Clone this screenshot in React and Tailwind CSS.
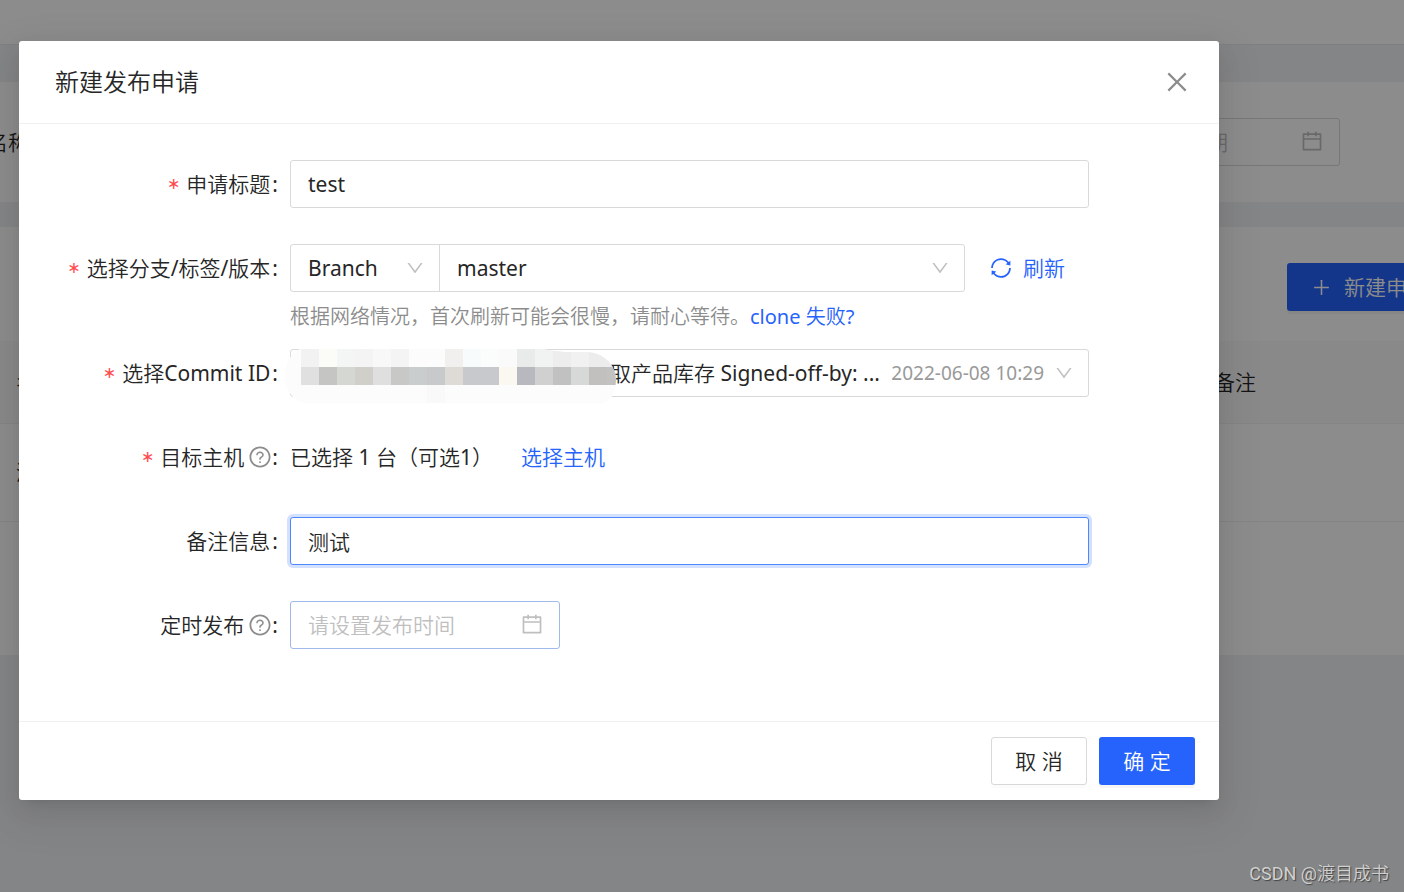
import React, { useState } from 'react'
import {
  AiOutlineCalendar,
  AiOutlineClose,
  AiOutlineDown,
  AiOutlinePlus,
  AiOutlineQuestionCircle,
  AiOutlineSync
} from 'react-icons/ai'

// 马赛克色块，每格 18px
const mosaic = [
  ['#f2f2f2', '#fbfcf8', '#f4f5f5', '#f4f4f4', '#f8f8f8', '#f4f4f4', '#fcfcfc', '#fcfcfc', '#f1f0ef', '#f8fbfb', '#fbfdfc', '#fbfafa', '#e8ebea', '#f1f2f2', '#ededed', '#f1f1f1', '#ececec', '#ececec'],
  ['#e0e0e0', '#c5c5c3', '#d5d7d3', '#d0cfca', '#dfdfe0', '#c8c8c6', '#c9cdce', '#c8c9ca', '#dedad6', '#c8c9cc', '#c8c9cc', '#faf8f0', '#b8b9be', '#d0d0d0', '#c1c1c1', '#d7d9d9', '#c1c0bf', '#c2c3c1'],
  ['#fcfcfc', '#fcfcfc', '#fcfcfc', '#fcfcfc', '#fcfcfc', '#fcfcfc', '#fcfcfc', '#f9f9f9', '#fcfcfc', '#fcfcfc', '#fcfcfc', '#fcfcfc', '#fcfcfc', '#fcfcfc', '#fcfcfc', '#fcfcfc', '#fcfcfc', '#fcfcfc']
]

const Mosaic = () => (
  <svg className="pointer-events-none absolute -left-[5px] top-0 h-[54px] w-[332px]" viewBox="0 0 332 54" aria-hidden="true">
    <clipPath id="mosaic-shape">
      <path d="M15 0H255C268 1 274 3 285 3H303C317 4 326 12 330 24C333 34 329 54 316 54H20C8 52 0 40 0 27C0 14 6 4 15 0Z" />
    </clipPath>
    <g clipPath="url(#mosaic-shape)" shapeRendering="crispEdges">
      <rect width="332" height="54" fill="#fcfcfc" />
      {mosaic.map((row, y) =>
        row.map((color, x) => (
          <rect key={`${y}-${x}`} x={16 + x * 18} y={y * 18} width="18" height="18" fill={color} />
        ))
      )}
    </g>
  </svg>
)

const FormItem = ({ label, htmlFor, required, tip, children }) => (
  <div className="grid grid-cols-[5fr_17fr_2fr]">
    <label htmlFor={htmlFor} className="flex h-12 items-center justify-end whitespace-nowrap pr-3">
      {required && <span className="mr-1.5 font-['DejaVu_Sans',sans-serif] text-base text-[#ff4d4f]">∗</span>}
      {label}
      {tip && <AiOutlineQuestionCircle className="ml-1 size-6 text-[#8c8c8c]" />}
      <span className={tip ? '' : 'ml-0.5'}>:</span>
    </label>
    <div className="min-w-0">{children}</div>
  </div>
)

const Arrow = () => (
  <AiOutlineDown className="pointer-events-none absolute right-[15px] top-3.5 size-5 text-[#bfbfbf]" />
)

// 遮罩下面的列表页
const ListPage = () => (
  <div className="min-h-screen overflow-hidden bg-[#f0f2f5]" inert>
    <header className="h-[45px] border-b border-[#e8e8e8] bg-white" />
    <section className="mt-[37px] flex h-[120px] items-center justify-between bg-white pr-16">
      <div className="-ml-[13px] flex items-center gap-3">
        <label htmlFor="app-name">名称:</label>
        <input id="app-name" className="h-12 w-60 rounded-[3px] border border-[#d9d9d9] px-4" />
      </div>
      <div className="relative">
        <input
          aria-label="结束日期"
          placeholder="结束日期"
          className="h-12 w-60 rounded-[3px] border border-[#d9d9d9] pl-[43px] placeholder:text-[#bfbfbf]"
        />
        <AiOutlineCalendar className="absolute right-4 top-[11px] size-6 text-[#bfbfbf]" />
      </div>
    </section>
    <section className="mt-[25px] h-[428px] bg-white pt-9">
      <div className="mb-[30px] flex justify-end">
        <button className="-mr-12 flex h-12 shrink-0 items-center gap-3 rounded-[3px] bg-[#2563fc] px-6 text-white shadow-[0_3px_0_rgba(0,0,0,0.045)]">
          <AiOutlinePlus className="size-[21px]" />
          新建申请
        </button>
      </div>
      <table className="w-full table-fixed text-left">
        <thead>
          <tr className="h-[82px] border-b border-[#f0f0f0] bg-[#fafafa]">
            <th className="w-[1198px] pl-4 font-normal">名称</th>
            <th className="pl-4 font-normal">备注</th>
          </tr>
        </thead>
        <tbody>
          <tr className="h-[98px] border-b border-[#f0f0f0]">
            <td className="pl-4">测试</td>
            <td />
          </tr>
        </tbody>
      </table>
    </section>
  </div>
)

const inputClass = 'block h-12 w-full rounded-[3px] border border-[#d9d9d9] bg-white px-[17px] outline-none'
const selectClass = 'block h-12 w-full appearance-none border border-[#d9d9d9] bg-white outline-none'

export default function App() {
  const [title, setTitle] = useState('test')
  const [remark, setRemark] = useState('测试')
  const [publishTime, setPublishTime] = useState('')

  return (
    <div className="relative font-['Noto_Sans','Noto_Sans_CJK_SC_DemiLight','Noto_Sans_CJK_SC_Light','Noto_Sans_CJK_SC',sans-serif] text-[21px] leading-8 text-[#262626]">
      <ListPage />

      <div className="absolute inset-0 overflow-hidden bg-black/45 px-[19px] pt-[41px]">
        <div
          role="dialog"
          aria-modal="true"
          aria-labelledby="dialog-title"
          className="w-full max-w-[1200px] rounded-[3px] bg-white shadow-[0_5px_9px_-6px_rgba(0,0,0,0.12),0_9px_24px_0_rgba(0,0,0,0.08),0_14px_42px_12px_rgba(0,0,0,0.05)]"
        >
          <div className="flex h-[83px] items-center justify-between border-b border-[#f0f0f0] pl-9 pr-7">
            <h2 id="dialog-title" className="text-2xl">新建发布申请</h2>
            <button aria-label="关闭" className="text-[#8c8c8c]">
              <AiOutlineClose className="size-7" />
            </button>
          </div>

          <form className="flex flex-col gap-9 px-9 pb-[72px] pt-9">
            <FormItem label="申请标题" htmlFor="title" required>
              <input id="title" className={inputClass} value={title} onChange={(e) => setTitle(e.target.value)} />
            </FormItem>

            <div className="flex flex-col gap-[18px]">
              <FormItem label="选择分支/标签/版本" htmlFor="branch-type" required>
                <div className="flex">
                  <div className="relative w-[150px]">
                    <select id="branch-type" className={`${selectClass} rounded-l-[3px] pl-[17px]`}>
                      <option>Branch</option>
                    </select>
                    <Arrow />
                  </div>
                  <div className="relative -ml-px flex-1">
                    <select aria-label="分支" className={`${selectClass} rounded-r-[3px] pl-[17px]`}>
                      <option>master</option>
                    </select>
                    <Arrow />
                  </div>
                  <button type="button" className="flex items-center gap-2.5 px-6 text-[#2563fc]">
                    <AiOutlineSync className="size-6" />
                    刷新
                  </button>
                </div>
                <p className="mt-[11px] whitespace-nowrap text-xl/7 text-[#8c8c8c]">
                  根据网络情况，首次刷新可能会很慢，请耐心等待。
                  <a href="#clone" className="text-[#2563fc]">clone 失败?</a>
                </p>
              </FormItem>

              <FormItem label="选择Commit ID" htmlFor="commit" required>
                <div className="relative">
                  <select id="commit" className={`${selectClass} rounded-[3px] pl-[319px]`}>
                    <option>取产品库存 Signed-off-by: ...</option>
                  </select>
                  <span className="pointer-events-none absolute right-[45px] top-2 text-[19px] text-[#999]">2022-06-08 10:29</span>
                  <Arrow />
                  <Mosaic />
                </div>
              </FormItem>
            </div>

            <FormItem label="目标主机" required tip>
              <div className="flex h-12 items-center gap-7">
                <span>已选择 1 台（可选1）</span>
                <button type="button" className="text-[#2563fc]">选择主机</button>
              </div>
            </FormItem>

            <FormItem label="备注信息" htmlFor="remark">
              <input
                id="remark"
                className="block h-12 w-full rounded-[3px] border border-[#4d88ff] bg-white px-[17px] shadow-[0_0_0_3px_rgba(37,99,252,0.2)] outline-none"
                value={remark}
                onChange={(e) => setRemark(e.target.value)}
              />
            </FormItem>

            <FormItem label="定时发布" htmlFor="publish-time" tip>
              <div className="relative w-[270px]">
                <input
                  id="publish-time"
                  placeholder="请设置发布时间"
                  className="block h-12 w-full rounded-[3px] border border-[#a0b8ea] bg-white px-[17px] outline-none placeholder:text-[#bfbfbf]"
                  value={publishTime}
                  onChange={(e) => setPublishTime(e.target.value)}
                />
                <AiOutlineCalendar className="absolute right-4 top-[11px] size-6 text-[#bfbfbf]" />
              </div>
            </FormItem>
          </form>

          <div className="flex justify-end gap-3 border-t border-[#f0f0f0] px-6 py-[15px]">
            <button className="h-12 w-24 rounded-[3px] border border-[#d9d9d9] bg-white shadow-[0_3px_0_rgba(0,0,0,0.015)]">取 消</button>
            <button className="h-12 w-24 rounded-[3px] bg-[#2563fc] text-white shadow-[0_3px_0_rgba(0,0,0,0.045)]">确 定</button>
          </div>
        </div>
      </div>

      <span className="absolute bottom-1 right-[15px] font-[Roboto,'Noto_Sans_CJK_SC_DemiLight','Noto_Sans_CJK_SC',sans-serif] text-lg text-[#d0d0d0] [text-shadow:1px_1px_1px_#444]">
        CSDN @渡目成书
      </span>
    </div>
  )
}
